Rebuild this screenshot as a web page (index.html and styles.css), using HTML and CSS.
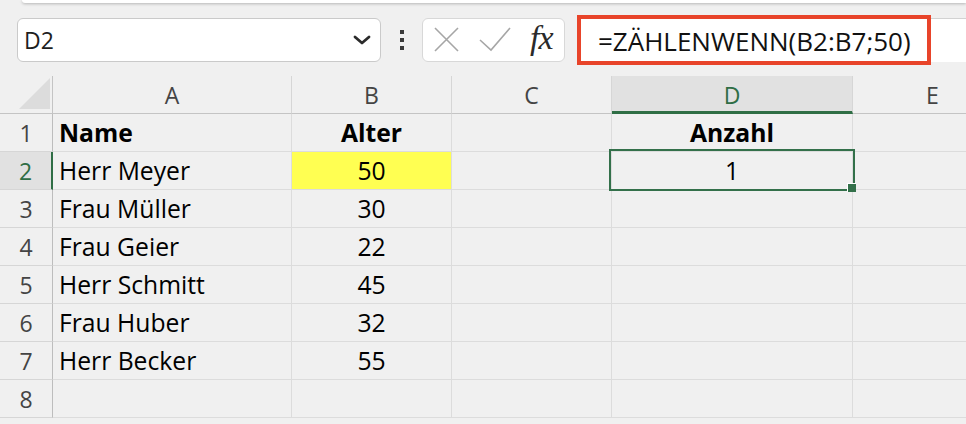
FILE: index.html
```html
<!DOCTYPE html>
<html lang="de">
<head>
    <meta charset="UTF-8">
    <meta name="viewport" content="width=device-width, initial-scale=1.0">
    <title>ZÄHLENWENN</title>
    <link rel="stylesheet" href="styles.css">
</head>
<body>
    <div class="top-panel"></div>

    <div class="toolbar">
        <div class="name-box">
            <span>D2</span>
            <svg class="chevron" width="18" height="10" viewBox="0 0 18 10">
                <path d="M2 2 L9 8 L16 2" fill="none" stroke="#2b2b2b" stroke-width="2.8" stroke-linecap="round" stroke-linejoin="round"/>
            </svg>
        </div>
        <div class="dots"><i></i><i></i><i></i></div>
        <div class="fx-box">
            <svg width="100" height="44" viewBox="0 0 100 44">
                <path d="M13 10 L36 33 M36 10 L13 33" stroke="#a6a6a6" stroke-width="1.6" fill="none"/>
                <path d="M58 22 L69 32 L88 10" stroke="#a6a6a6" stroke-width="1.6" fill="none"/>
            </svg>
            <span class="fx">fx</span>
        </div>
        <div class="formula">
            <span>=ZÄHLENWENN(B2:B7;50)</span>
            <div class="mark"></div>
        </div>
    </div>

    <div class="sheet">
        <div class="corner"><div class="tri"></div></div>
        <div class="col-head">A</div>
        <div class="col-head">B</div>
        <div class="col-head">C</div>
        <div class="col-head active">D</div>
        <div class="col-head">E</div>

        <div class="row-head">1</div>
        <div class="cell bold">Name</div>
        <div class="cell bold center">Alter</div>
        <div class="cell"></div>
        <div class="cell bold center">Anzahl</div>
        <div class="cell"></div>

        <div class="row-head active">2</div>
        <div class="cell">Herr Meyer</div>
        <div class="cell center yellow">50</div>
        <div class="cell"></div>
        <div class="cell center selected">1</div>
        <div class="cell"></div>

        <div class="row-head">3</div>
        <div class="cell">Frau Müller</div>
        <div class="cell center">30</div>
        <div class="cell"></div>
        <div class="cell"></div>
        <div class="cell"></div>

        <div class="row-head">4</div>
        <div class="cell">Frau Geier</div>
        <div class="cell center">22</div>
        <div class="cell"></div>
        <div class="cell"></div>
        <div class="cell"></div>

        <div class="row-head">5</div>
        <div class="cell">Herr Schmitt</div>
        <div class="cell center">45</div>
        <div class="cell"></div>
        <div class="cell"></div>
        <div class="cell"></div>

        <div class="row-head">6</div>
        <div class="cell">Frau Huber</div>
        <div class="cell center">32</div>
        <div class="cell"></div>
        <div class="cell"></div>
        <div class="cell"></div>

        <div class="row-head">7</div>
        <div class="cell">Herr Becker</div>
        <div class="cell center">55</div>
        <div class="cell"></div>
        <div class="cell"></div>
        <div class="cell"></div>

        <div class="row-head">8</div>
        <div class="cell"></div>
        <div class="cell"></div>
        <div class="cell"></div>
        <div class="cell"></div>
        <div class="cell"></div>
    </div>
</body>
</html>
```

FILE: styles.css
```css
* {
    box-sizing: border-box;
}

body {
    margin: 0;
    background-color: #f0f0f0;
    font-family: "Open Sans", "Noto Sans", sans-serif;
    color: #000000;
    overflow: hidden;
}

.top-panel {
    height: 3px;
    margin-left: 22px;
    background-color: #ffffff;
    border-bottom-left-radius: 6px;
    box-shadow: 0 1px 3px rgba(0, 0, 0, 0.25);
}

.toolbar {
    display: flex;
    align-items: flex-start;
    height: 73px;
    padding: 15px 0 0 17px;
}

.name-box {
    display: flex;
    align-items: center;
    justify-content: space-between;
    width: 364px;
    height: 44px;
    padding: 0 9px 0 6px;
    background-color: #ffffff;
    border: 1px solid #cacaca;
    border-radius: 6px;
    font-size: 23px;
    color: #1e1e1e;
}

.dots {
    display: flex;
    flex-direction: column;
    gap: 4px;
    margin: 12px 0 0 19px;
}

.dots i {
    display: block;
    width: 4px;
    height: 4px;
    background-color: #3a3a3a;
}

.fx-box {
    display: flex;
    align-items: center;
    width: 143px;
    height: 44px;
    margin-left: 18px;
    background-color: #ffffff;
    border: 1px solid #d8d8d8;
    border-radius: 6px;
}

.fx-box svg {
    margin-left: -1px;
}

.fx {
    margin-left: 8px;
    font-family: "Liberation Serif", serif;
    font-style: italic;
    font-size: 34px;
    color: #2a2a2a;
    line-height: 1;
    margin-top: -5px;
    letter-spacing: -1px;
}

.formula {
    position: relative;
    flex: 1;
    display: flex;
    align-items: center;
    height: 44px;
    margin-left: 12px;
    padding-left: 21px;
    background-color: #ffffff;
    border-top: 1px solid #d2d2d2;
    font-size: 26px;
    color: #111111;
}

/* red annotation frame drawn over the formula bar */
.formula .mark {
    position: absolute;
    left: 0;
    top: -4px;
    width: 354px;
    height: 50px;
    border: 4px solid #e8442a;
}

.sheet {
    display: grid;
    grid-template-columns: 53px 239px 160px 160px 241px 160px;
    grid-auto-rows: 38px;
}

.corner {
    display: flex;
    justify-content: flex-end;
    align-items: flex-end;
    padding: 0 2px 4px 0;
    border-right: 1px solid #c4c4c4;
    border-bottom: 1px solid #c4c4c4;
}

.corner .tri {
    width: 31px;
    height: 31px;
    background-color: #dcdcdc;
    clip-path: polygon(100% 0, 100% 100%, 0 100%);
}

.col-head {
    display: flex;
    align-items: center;
    justify-content: center;
    border-right: 1px solid #d6d6d6;
    border-bottom: 1px solid #c4c4c4;
    font-size: 23px;
    color: #444444;
}

.col-head.active {
    background-color: #e1e1e1;
    border-bottom: 3px solid #2f6e45;
    color: #2f6e45;
    padding-top: 2px;
}

.row-head {
    display: flex;
    align-items: center;
    justify-content: center;
    border-right: 1px solid #bdbdbd;
    border-bottom: 1px solid #d6d6d6;
    font-size: 23px;
    color: #444444;
}

.row-head.active {
    background-color: #e1e1e1;
    border-right: 2px solid #2f6e45;
    color: #2f6e45;
}

.cell {
    display: flex;
    align-items: center;
    padding-left: 6px;
    border-right: 1px solid #dcdcdc;
    border-bottom: 1px solid #dcdcdc;
    font-size: 24.7px;
    white-space: nowrap;
}

.cell.center {
    justify-content: center;
    padding-left: 0;
}

.cell.bold {
    font-weight: 700;
}

.cell.yellow {
    background-color: #ffff52;
}

.cell.selected {
    position: relative;
}

.cell.selected::after {
    content: "";
    position: absolute;
    left: -3px;
    top: -3px;
    right: -3px;
    bottom: -2px;
    border: 2.5px solid #33704a;
}

.cell.selected::before {
    content: "";
    position: absolute;
    right: -4px;
    bottom: -3px;
    width: 8px;
    height: 8px;
    background-color: #33704a;
    border-left: 1px solid #ffffff;
    border-top: 1px solid #ffffff;
    z-index: 1;
}
```
